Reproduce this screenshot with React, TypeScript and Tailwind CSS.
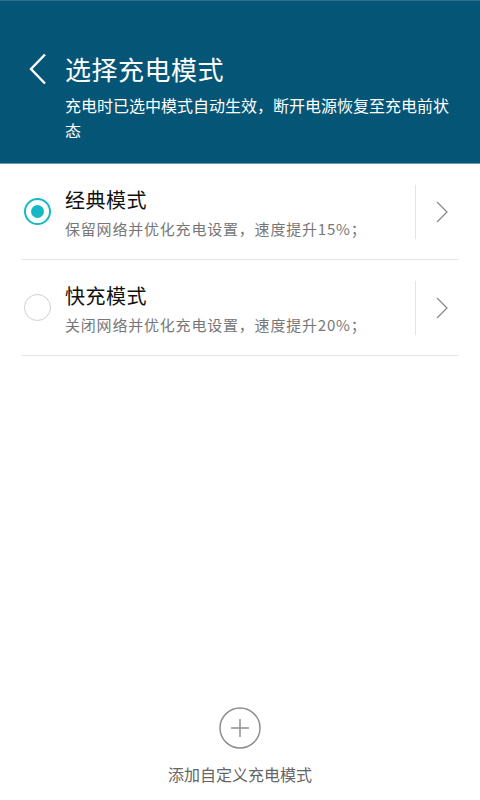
import React from 'react';

interface Mode {
  title: string;
  description: string;
  selected?: boolean;
}

const modes: Mode[] = [
  { title: '经典模式', description: '保留网络并优化充电设置，速度提升15%；', selected: true },
  { title: '快充模式', description: '关闭网络并优化充电设置，速度提升20%；' },
];

const App: React.FC = () => {
  return (
    <div
      className="flex flex-col w-[480px] h-[800px] bg-white overflow-hidden"
      style={{ fontFamily: '"Noto Sans CJK SC", "Noto Sans", sans-serif' }}
    >
      {/* header */}
      <div className="h-[164px] bg-[#055676] border-t border-t-[#2a6f8c] border-b border-b-[#6a9bb0] shrink-0">
        <div className="flex items-center mt-[51px] pl-[28px]">
          <svg width="20" height="32" viewBox="0 0 20 32" fill="none" className="mr-[17px]">
            <path d="M17 1.5 L3 16 L17 30.5" stroke="white" strokeWidth="2.4" />
          </svg>
          <h1 className="text-[26px] leading-[34px] text-white tracking-[0.5px]">选择充电模式</h1>
        </div>
        <p className="mt-[7px] ml-[65px] w-[392px] text-[16px] leading-[25px] text-white">
          充电时已选中模式自动生效，断开电源恢复至充电前状态
        </p>
      </div>

      {/* list */}
      <div className="px-[22px]">
        {modes.map((mode, index) => (
          <div key={index} className="flex items-center h-[96px] border-b border-[#e6e6e6]">
            <div className="w-[43px] pl-[2px] flex items-center">
              {mode.selected ? (
                <div className="w-[27px] h-[27px] rounded-full border-2 border-[#15b9c6] flex items-center justify-center">
                  <div className="w-[13px] h-[13px] rounded-full bg-[#15b9c6]" />
                </div>
              ) : (
                <div className="w-[27px] h-[27px] rounded-full border border-[#cfcfcf]" />
              )}
            </div>
            <div className="flex-1 pt-[1px]">
              <div className="text-[20px] leading-[28px] text-[#111] tracking-[0.5px]">{mode.title}</div>
              <div className="mt-[5px] text-[15px] leading-[20px] text-[#777] tracking-[0.8px]">{mode.description}</div>
            </div>
            <div className="flex items-center h-[54px] border-l border-[#e3e3e3] pl-[20px] pr-[10px]">
              <svg width="12" height="22" viewBox="0 0 12 22" fill="none">
                <path d="M1 1 L11 11 L1 21" stroke="#8a8a8a" strokeWidth="1.3" />
              </svg>
            </div>
          </div>
        ))}
      </div>

      <div className="flex-1" />

      {/* add custom mode */}
      <div className="flex flex-col items-center pb-[15px]">
        <svg width="42" height="42" viewBox="0 0 42 42" fill="none">
          <circle cx="21" cy="21" r="20" stroke="#8e8e8e" strokeWidth="1.5" />
          <path d="M21 12 V30 M12 21 H30" stroke="#8e8e8e" strokeWidth="1.5" />
        </svg>
        <div className="mt-[14px] text-[16px] leading-[22px] text-[#666]">添加自定义充电模式</div>
      </div>
    </div>
  );
};

export default App;
